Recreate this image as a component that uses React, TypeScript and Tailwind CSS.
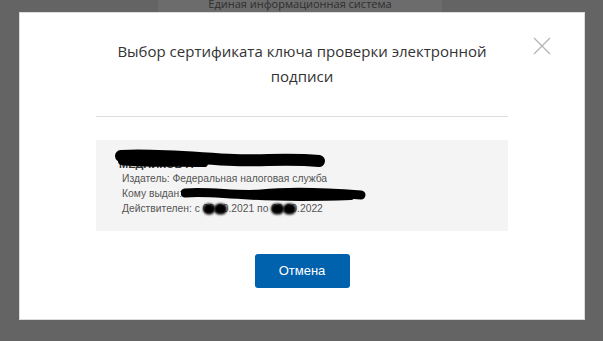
import React from 'react';

function Blob({ w, h = 12 }: { w: number; h?: number }) {
  return (
    <span
      className="absolute top-1/2 left-0 -translate-y-1/2 rounded-full bg-black blur-[1px]"
      style={{ width: w, height: h }}
    />
  );
}

function Hidden({ text, w }: { text: string; w: number }) {
  return (
    <span className="relative inline-block">
      {text}
      <Blob w={w} h={11} />
    </span>
  );
}

export default function App() {
  return (
    <div className="relative h-[341px] w-[603px] overflow-hidden bg-[#646464] font-['Open_Sans',sans-serif]">
      {/* page underneath the overlay */}
      <div className="ml-[158px] h-[40px] w-[284px] bg-[#6c6c6c] pt-[-2px] text-center text-[11px] leading-[13px] text-[#2e2e2e]">
        <div className="-mt-[3px]">Единая информационная система</div>
        <div>(ЕРУЗ)</div>
      </div>

      {/* modal */}
      <div className="absolute top-[12px] left-[19px] flex h-[308px] w-[566px] flex-col border border-[#dcdcdc] bg-white px-[76px]">
        <button className="absolute top-[24px] right-[33px] h-[18px] w-[18px] text-[#b3b3b3]">
          <svg viewBox="0 0 18 18" className="h-full w-full" fill="none" stroke="currentColor" strokeWidth="1.2">
            <path d="M1 1l16 16M17 1L1 17" />
          </svg>
        </button>

        <h2 className="mx-auto mt-[26px] max-w-[396px] text-center text-[15px] leading-[25px] font-normal text-[#333]">
          Выбор сертификата ключа проверки электронной подписи
        </h2>

        <div className="mt-[27px] h-px bg-[#dedede]" />

        <div className="relative mt-[23px] h-[91px] bg-[#f4f4f4] pt-[11px] pl-[21px] font-['Liberation_Sans',Arial,sans-serif] text-[10.3px] leading-[15px] text-[#555]">
          <div className="relative h-[20px] text-[11px] font-bold text-[#333]">
            <span className="relative top-[6px] pl-[2px]">МЕДНИКОВ А</span>
            <svg className="absolute top-[-3px] left-[-3px] h-[24px] w-[212px]" viewBox="0 0 212 24">
              <path
                d="M7 8 C40 6 80 10 120 12 C150 13 175 10 205 13"
                stroke="#000"
                strokeWidth="12"
                strokeLinecap="round"
                fill="none"
              />
              <path d="M8 13 C30 16 60 14 90 15" stroke="#000" strokeWidth="8" strokeLinecap="round" fill="none" />
            </svg>
          </div>
          <div className="pl-[5px]">
            <div>Издатель: Федеральная налоговая служба</div>
            <div className="flex items-center">
              <span>Кому выдан:</span>
              <svg className="-ml-[1px] h-[14px] w-[186px]" viewBox="0 0 186 14">
                <path
                  d="M4 6 C30 4 55 9 80 7 C110 4 140 5 180 8"
                  stroke="#000"
                  strokeWidth="9"
                  strokeLinecap="round"
                  fill="none"
                />
                <path d="M60 9 C100 12 140 11 170 10" stroke="#000" strokeWidth="6" strokeLinecap="round" fill="none" />
              </svg>
            </div>
            <div>
              Действителен: с <Hidden text="00" w={12} />
              <Hidden text=".00" w={13} />
              .2021 по <Hidden text="00" w={13} />
              <Hidden text=".00" w={13} />
              .2022
            </div>
          </div>
        </div>

        <button className="mx-auto mt-[23px] h-[34px] w-[95px] rounded-[3px] bg-[#0061ad] font-['Liberation_Sans',Arial,sans-serif] text-[13px] text-white">
          Отмена
        </button>
      </div>
    </div>
  );
}
